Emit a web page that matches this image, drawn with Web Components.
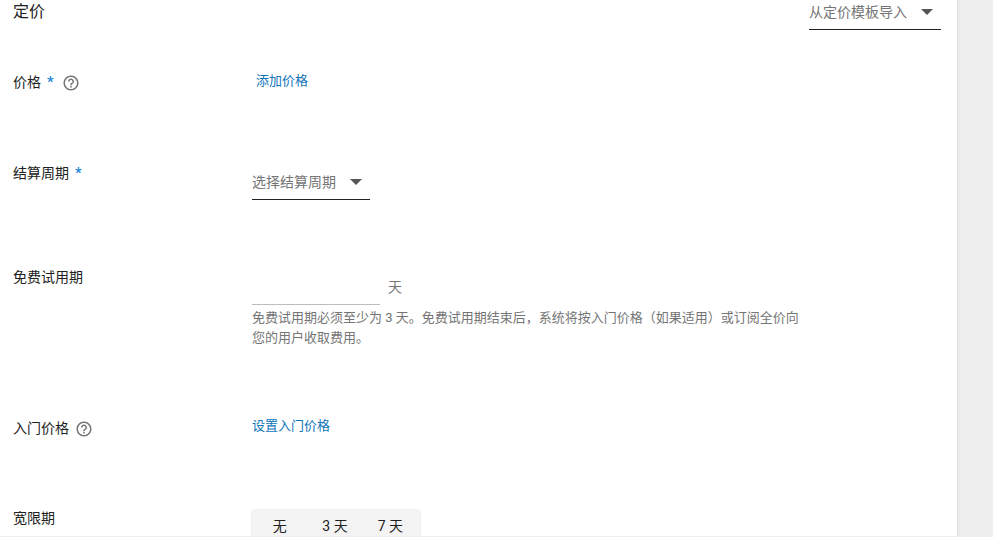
<!DOCTYPE html>
<html lang="zh">
<head>
<meta charset="utf-8">
<title>定价</title>
<style>
	html, body { margin: 0; height: 542px; overflow: hidden; background: #fff; }
	body { font-family: Roboto, "Noto Sans CJK SC", sans-serif; }
</style>
</head>
<body>
<pricing-page>
	<section-head slot="head">
		定价
		<drop-down slot="action" style="--w:132px;--gap:14px">从定价模板导入</drop-down>
	</section-head>

	<form-row top="72" height="91" ctrl="0" indent="4">
		<span slot="label">价格</span><req-mark slot="label"></req-mark><help-icon slot="label"></help-icon>
		<text-link>添加价格</text-link>
	</form-row>

	<form-row top="0" height="104" ctrl="7">
		<span slot="label">结算周期</span><req-mark slot="label"></req-mark>
		<drop-down style="--w:118px;--gap:14px">选择结算周期</drop-down>
	</form-row>

	<form-row top="0" height="151" ctrl="9">
		<span slot="label">免费试用期</span>
		<trial-input>免费试用期必须至少为 3 天。免费试用期结束后，系统将按入门价格（如果适用）或订阅全价向<br>您的用户收取费用。</trial-input>
	</form-row>

	<form-row top="0" height="90" ctrl="-1">
		<span slot="label">入门价格</span><help-icon slot="label"></help-icon>
		<text-link>设置入门价格</text-link>
	</form-row>

	<form-row top="0" height="41" ctrl="1">
		<span slot="label">宽限期</span>
		<seg-control></seg-control>
	</form-row>
</pricing-page>

<script>
	class PricingPage extends HTMLElement {
		constructor() {
			super();
			this.attachShadow({mode: "open"}).innerHTML = `
				<style>
					:host { display: block; height: 536px; background: #eee; box-shadow: 0 1px 0 #ececec; overflow: hidden; }
					.card { width: 957px; height: 536px; background: #fff; box-shadow: 1px 0 2px rgba(0,0,0,.08); overflow: hidden; }
				</style>
				<div class="card"><slot name="head"></slot><slot></slot></div>`;
		}
	}

	class SectionHead extends HTMLElement {
		constructor() {
			super();
			this.attachShadow({mode: "open"}).innerHTML = `
				<style>
					:host { display: flex; justify-content: space-between; align-items: flex-start; padding: 0 16px 0 13px; height: 30px; font-size: 16px; line-height: 24px; color: #212121; }
				</style>
				<slot></slot><slot name="action"></slot>`;
		}
	}

	class FormRow extends HTMLElement {
		constructor() {
			super();
			this.attachShadow({mode: "open"}).innerHTML = `
				<style>
					:host { display: flex; align-items: flex-start; font-size: 14px; color: #212121; box-sizing: border-box; }
					.label { width: 239px; margin-left: 13px; display: flex; align-items: center; line-height: 20px; white-space: nowrap; }
					.ctrl { flex: 1; }
				</style>
				<div class="label"><slot name="label"></slot></div>
				<div class="ctrl"><slot></slot></div>`;
		}
		connectedCallback() {
			let top = +this.getAttribute("top") || 0;
			if(top) this.style.marginTop = (top - 30) + "px";
			this.style.height = this.getAttribute("height") + "px";
			let ctrl = this.shadowRoot.querySelector(".ctrl");
			ctrl.style.marginTop = (this.getAttribute("ctrl") || 0) + "px";
			ctrl.style.paddingLeft = (this.getAttribute("indent") || 0) + "px";
		}
	}

	class ReqMark extends HTMLElement {
		constructor() {
			super();
			this.attachShadow({mode: "open"}).innerHTML = `
				<style>:host { display: inline-block; margin: 0 2px 0 6px; color: #1a85d6; font-size: 15px; font-weight: 500; }</style>*`;
		}
	}

	class HelpIcon extends HTMLElement {
		constructor() {
			super();
			this.attachShadow({mode: "open"}).innerHTML = `
				<style>:host { display: inline-flex; margin-left: 6px; margin-top: 2px; } svg { display: block; }</style>
				<svg width="18" height="18" viewBox="0 0 24 24" fill="#757575"><path d="M11 18h2v-2h-2v2zm1-16C6.48 2 2 6.48 2 12s4.48 10 10 10 10-4.48 10-10S17.52 2 12 2zm0 18c-4.41 0-8-3.59-8-8s3.59-8 8-8 8 3.59 8 8-3.59 8-8 8zm0-14c-2.21 0-4 1.79-4 4h2c0-1.1.9-2 2-2s2 .9 2 2c0 2-3 1.75-3 5h2c0-2.25 3-2.5 3-5 0-2.21-1.79-4-4-4z"/></svg>`;
		}
	}

	class TextLink extends HTMLElement {
		constructor() {
			super();
			this.attachShadow({mode: "open"}).innerHTML = `
				<style>:host { display: inline-block; color: #0f74b8; font-size: 13px; line-height: 16px; cursor: pointer; }</style><slot></slot>`;
		}
	}

	class DropDown extends HTMLElement {
		constructor() {
			super();
			this.attachShadow({mode: "open"}).innerHTML = `
				<style>
					:host { display: block; width: var(--w); box-sizing: border-box; height: 30px; border-bottom: 1px solid #212121; font-size: 14px; line-height: 24px; color: #757575; white-space: nowrap; }
					.in { display: flex; align-items: center; height: 24px; }
					i { width: 0; height: 0; margin-left: var(--gap); border: 6px solid transparent; border-top: 6px solid #555; border-bottom: 0; }
				</style>
				<div class="in"><slot></slot><i></i></div>`;
		}
	}

	class TrialInput extends HTMLElement {
		constructor() {
			super();
			this.attachShadow({mode: "open"}).innerHTML = `
				<style>
					:host { display: block; color: #757575; font-size: 13px; }
					.field { display: flex; align-items: flex-end; }
					.box { width: 128px; height: 28px; border-bottom: 1px solid #bdbdbd; }
					.unit { margin-left: 8px; font-size: 14px; line-height: 20px; padding-bottom: 8px; }
					.hint { margin-top: 3px; line-height: 20px; white-space: nowrap; }
				</style>
				<div class="field"><div class="box"></div><span class="unit">天</span></div>
				<div class="hint"><slot></slot></div>`;
		}
	}

	class SegControl extends HTMLElement {
		constructor() {
			super();
			this.attachShadow({mode: "open"}).innerHTML = `
				<style>
					:host { display: flex; width: 168px; height: 40px; padding-right: 2px; box-sizing: border-box; background: #f3f3f3; border-radius: 3px; box-shadow: 0 1px 2px rgba(0,0,0,.2); color: #212121; font-size: 14px; }
					span { flex: 1; text-align: center; padding-top: 7px; line-height: 20px; white-space: nowrap; }
				</style>
				<span>无</span><span>3 天</span><span>7 天</span>`;
		}
	}

	customElements.define("pricing-page", PricingPage);
	customElements.define("section-head", SectionHead);
	customElements.define("form-row", FormRow);
	customElements.define("req-mark", ReqMark);
	customElements.define("help-icon", HelpIcon);
	customElements.define("text-link", TextLink);
	customElements.define("drop-down", DropDown);
	customElements.define("trial-input", TrialInput);
	customElements.define("seg-control", SegControl);
</script>
</body>
</html>
